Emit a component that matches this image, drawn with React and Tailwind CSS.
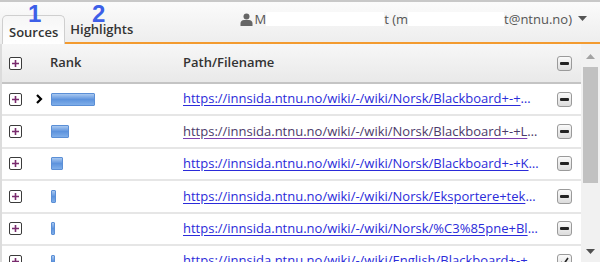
import { useState } from 'react';

const rows = [
  { w: 44, url: 'https://innsida.ntnu.no/wiki/-/wiki/Norsk/Blackboard+-+Opprette+emneside', current: true },
  { w: 18, url: 'https://innsida.ntnu.no/wiki/-/wiki/Norsk/Blackboard+-+Legge+til+innhold', visited: true },
  { w: 12, url: 'https://innsida.ntnu.no/wiki/-/wiki/Norsk/Blackboard+-+Kopiere+emne' },
  { w: 5, url: 'https://innsida.ntnu.no/wiki/-/wiki/Norsk/Eksportere+tekster+fra+Blackboard' },
  { w: 4, url: 'https://innsida.ntnu.no/wiki/-/wiki/Norsk/%C3%85pne+Blackboard' },
  { w: 4, url: 'https://innsida.ntnu.no/wiki/-/wiki/English/Blackboard+-+Course', last: true },
];

function PlusBox() {
  return (
    <span className="flex h-[13px] w-[13px] items-center justify-center rounded-[2px] border border-[#3b3b3b] bg-white">
      <svg width="9" height="9" viewBox="0 0 9 9">
        <path d="M4.5 1v7M1 4.5h7" stroke="#7a2b6e" strokeWidth="1.6" />
      </svg>
    </span>
  );
}

function MinusBtn({ check }) {
  return (
    <span className="flex h-[15px] w-[15px] items-center justify-center rounded-[3px] border border-[#9a9a9a] bg-gradient-to-b from-[#fafafa] to-[#dcdcdc]">
      {check ? (
        <svg width="9" height="9" viewBox="0 0 9 9">
          <path d="M1 5l2.5 2.5L8 1" stroke="#222" strokeWidth="1.6" fill="none" />
        </svg>
      ) : (
        <span className="h-[3px] w-[9px] rounded-[1px] bg-[#222]" />
      )}
    </span>
  );
}

function Bar({ w }) {
  return (
    <span
      className="block h-[13px] rounded-[1px] border border-[#5b8fd6] bg-gradient-to-b from-[#a9c8f0] via-[#5d93dd] to-[#7faee9]"
      style={{ width: w }}
    />
  );
}

export default function App() {
  const [tab, setTab] = useState('sources');

  return (
    <div className="relative h-[262px] w-[600px] overflow-hidden bg-white font-['Open_Sans',sans-serif] text-[#333]">
      {/* Top bar */}
      <div className="flex h-[44px] items-end border-t-2 border-[#c8c8c8] bg-gradient-to-b from-[#fbfbfb] to-[#ededed] pl-[2px]">
        <button
          onClick={() => setTab('sources')}
          className="h-[29px] rounded-t-[5px] border border-b-0 border-[#cfcfcf] bg-gradient-to-b from-[#f6f6f6] to-white px-[6px] pt-[4px] text-left text-[13px] font-semibold leading-[18px] text-[#333]"
        >
          Sources
        </button>
        <div className="flex h-[29px] flex-1 items-start border-b-2 border-[#f39b30] pl-[5px]">
          <button
            onClick={() => setTab('highlights')}
            className="pt-[5px] text-[13px] font-semibold leading-[18px] text-[#333]"
          >
            Highlights
          </button>
          <div className="ml-auto mr-[13px] mt-[-5px] flex items-center whitespace-nowrap text-[13px] leading-[18px] text-[#555]">
            <svg width="13" height="13" viewBox="0 0 13 13" className="mr-[2px]">
              <circle cx="6.5" cy="3.5" r="3" fill="#666" />
              <path d="M0.5 13v-2.5c0-2 1.5-3.5 3.5-3.5h5c2 0 3.5 1.5 3.5 3.5V13z" fill="#666" />
            </svg>
            <span>M</span>
            <span className="inline-block h-[14px] w-[118px] bg-white" />
            <span>t (m</span>
            <span className="inline-block h-[14px] w-[96px] bg-white" />
            <span>t@ntnu.no)</span>
            <svg width="9" height="6" viewBox="0 0 9 6" className="ml-[6px]">
              <path d="M0 0h9L4.5 5z" fill="#555" />
            </svg>
          </div>
        </div>
      </div>

      {/* annotation numbers */}
      <span className="absolute left-[28px] top-[2px] font-['Liberation_Sans',sans-serif] text-[24px] font-bold leading-[24px] text-[#3d5fe8]">1</span>
      <span className="absolute left-[92px] top-[2px] font-['Liberation_Sans',sans-serif] text-[24px] font-bold leading-[24px] text-[#3d5fe8]">2</span>

      {/* Table + scrollbar */}
      <div className="flex h-[218px]">
        <div className="min-w-0 flex-1 overflow-hidden border-l-2 border-[#dcdcdc]">
          <div className="flex h-[40px] items-center border-b-2 border-[#c4c4c4] bg-gradient-to-b from-[#f7f7f7] to-[#e9e9e9] text-[13px] font-semibold">
            <div className="w-[32px] shrink-0 pl-[7px]"><PlusBox /></div>
            <div className="w-[149px] shrink-0 pl-[16px]">Rank</div>
            <div className="min-w-0 flex-1">Path/Filename</div>
            <div className="w-[32px] shrink-0 pl-[8px]"><MinusBtn /></div>
          </div>
          {rows.map((r, i) => (
            <div key={i} className="flex h-[32.4px] shrink-0 items-center border-b-2 border-[#e6e6e6]">
              <div className="w-[32px] shrink-0 pl-[7px]"><PlusBox /></div>
              <div className="flex w-[149px] shrink-0 items-center pl-[2px]">
                <span className="flex w-[15px] items-center">
                  {r.current && (
                    <svg width="7" height="10" viewBox="0 0 7 10">
                      <path d="M1 1l4 4-4 4" stroke="#000" strokeWidth="2.2" fill="none" />
                    </svg>
                  )}
                </span>
                <Bar w={r.w} />
              </div>
              <a
                href="#"
                className={
                  'min-w-0 flex-1 truncate pr-[9px] text-[13px] underline underline-offset-2 ' +
                  (r.visited ? 'text-[#4b3a6a] decoration-[#7d3fb0]' : 'text-[#2b2bd9] decoration-[#2b2bd9]')
                }
              >
                {r.url}
              </a>
              <div className="w-[32px] shrink-0 pl-[8px]"><MinusBtn check={r.last} /></div>
            </div>
          ))}
        </div>
        <div className="flex w-[19px] shrink-0 flex-col items-center bg-[#f1f1f1]">
          <svg width="9" height="5" viewBox="0 0 9 5" className="mt-[10px]">
            <path d="M0 5h9L4.5 0z" fill="#a3a3a3" />
          </svg>
          <div className="mt-[8px] h-[116px] w-[15px] bg-[#c1c1c1]" />
          <svg width="9" height="5" viewBox="0 0 9 5" className="mt-auto mb-[8px]">
            <path d="M0 0h9L4.5 5z" fill="#505050" />
          </svg>
        </div>
      </div>
    </div>
  );
}
